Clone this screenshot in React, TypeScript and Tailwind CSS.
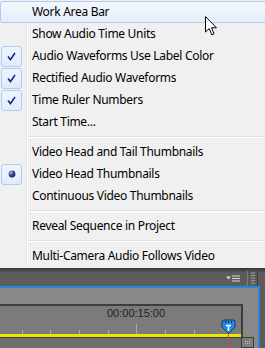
import React from 'react'

type Item =
  | { kind: 'sep' }
  | { kind: 'row'; label: string; mark?: 'check' | 'radio'; hot?: boolean }

const items: Item[] = [
  { kind: 'row', label: 'Work Area Bar', hot: true },
  { kind: 'row', label: 'Show Audio Time Units' },
  { kind: 'row', label: 'Audio Waveforms Use Label Color', mark: 'check' },
  { kind: 'row', label: 'Rectified Audio Waveforms', mark: 'check' },
  { kind: 'row', label: 'Time Ruler Numbers', mark: 'check' },
  { kind: 'row', label: 'Start Time...' },
  { kind: 'sep' },
  { kind: 'row', label: 'Video Head and Tail Thumbnails' },
  { kind: 'row', label: 'Video Head Thumbnails', mark: 'radio' },
  { kind: 'row', label: 'Continuous Video Thumbnails' },
  { kind: 'sep' },
  { kind: 'row', label: 'Reveal Sequence in Project' },
  { kind: 'sep' },
  { kind: 'row', label: 'Multi-Camera Audio Follows Video' },
]

const ticks = [21.5, 50.2, 78.9, 107.6, 136.3, 165, 193.7]

function Gutter() {
  return (
    <div className="flex h-full shrink-0">
      <div className="w-[26px]" />
      <div className="w-px bg-[#e2e3e3]" />
      <div className="w-px bg-white" />
    </div>
  )
}

function Mark({ type }: { type: 'check' | 'radio' }) {
  return (
    <div className="flex h-[21px] w-[21px] items-center justify-center rounded-[3px] border border-[#aecbf0] bg-gradient-to-b from-[#edf4fd] to-[#e2ecf9]">
      {type === 'check' ? (
        <svg width="9" height="9" viewBox="0 0 9 9">
          <path d="M1 4.6 L3.4 7.6 L8 1" fill="none" stroke="#1a2590" strokeWidth="1.6" />
        </svg>
      ) : (
        <svg width="8" height="8" viewBox="0 0 8 8">
          <defs>
            <radialGradient id="dot" cx="0.35" cy="0.3" r="0.7">
              <stop offset="0" stopColor="#b8b8f0" />
              <stop offset="0.5" stopColor="#4a4aa0" />
              <stop offset="1" stopColor="#1a1a5a" />
            </radialGradient>
          </defs>
          <circle cx="4" cy="4" r="3.4" fill="url(#dot)" />
        </svg>
      )}
    </div>
  )
}

function Menu() {
  return (
    <div className="w-[272px] bg-[#f0f0f0] pt-px pb-px text-[12px] tracking-[-0.3px] text-black font-['Noto_Sans',sans-serif]">
      {items.map((it, i) => {
        if (it.kind === 'sep') {
          return (
            <div key={i} className="flex h-[8px]">
              <Gutter />
              <div className="flex flex-1 flex-col justify-center">
                <div className="h-px bg-[#e0e0e0]" />
                <div className="h-px bg-white" />
              </div>
            </div>
          )
        }
        if (it.hot) {
          return (
            <div
              key={i}
              className="flex h-[22px] items-center rounded-[3px] border border-[#a9cdf2] bg-gradient-to-b from-[#f4f8fd] to-[#e4edf9] pl-[31px]"
            >
              {it.label}
            </div>
          )
        }
        return (
          <div key={i} className="flex h-[22px] items-center">
            <div className="relative flex h-full shrink-0">
              <Gutter />
              {it.mark && (
                <div className="absolute left-px top-[0.5px]">
                  <Mark type={it.mark} />
                </div>
              )}
            </div>
            <span className="pl-[4px]">{it.label}</span>
          </div>
        )
      })}
    </div>
  )
}

function Cursor() {
  return (
    <svg className="absolute left-[205px] top-[16px]" width="13" height="20" viewBox="0 0 13 20">
      <path
        d="M0.5 0.5 L0.5 16 L4.2 12.6 L6.8 18.8 L9 17.8 L6.5 11.8 L11.5 11.8 Z"
        fill="white"
        stroke="black"
        strokeWidth="1"
        strokeLinejoin="miter"
      />
    </svg>
  )
}

function Playhead() {
  return (
    <>
      <svg className="absolute left-[221px] top-[319px]" width="15" height="16" viewBox="0 0 15 16">
        <path d="M1 3 Q1 1 3 1 L12 1 Q14 1 14 3 L14 8 L7.5 14.5 L1 8 Z" fill="#1e8de6" stroke="#143a5c" strokeWidth="1" />
        <path d="M4.5 2 V4 M7.5 2 V4 M10.5 2 V4" stroke="#103050" strokeWidth="1" />
        <path d="M5 6.5 H10 M7.5 6.5 V12" stroke="white" strokeWidth="1.6" />
      </svg>
      <div className="absolute left-[228px] top-[334px] h-[14px] w-px bg-[#e8402a]" />
    </>
  )
}

export default function App() {
  return (
    <div className="relative h-[348px] w-[265px] overflow-hidden bg-[#5e5e5e]">
      <Menu />

      {/* panel header */}
      <div className="flex h-[18px] items-center bg-[linear-gradient(#363636,#5c5c5c_5px)] pt-[3px]">
        <div className="w-[226px]" />
        <svg width="15" height="8" viewBox="0 0 15 8">
          <path d="M0 1.5 H5 L2.5 4.5 Z" fill="#d8d8d8" />
          <path d="M6 1 H14 M6 3.5 H14 M6 6 H14" stroke="#d8d8d8" strokeWidth="1" />
        </svg>
        <div className="ml-[6px] h-[15px] w-px bg-[#7a7a7a]" />
        <svg className="ml-[3px]" width="4" height="13" viewBox="0 0 4 13">
          <path d="M0 1 H4 M0 3.5 H4 M0 6 H4 M0 8.5 H4 M0 11 H4" stroke="#9a9a9a" strokeWidth="1" />
        </svg>
        <div className="ml-[2px] h-[15px] w-px bg-[#3c3c3c]" />
      </div>

      {/* timeline panel */}
      <div className="flex">
        <div className="w-[260px] border-t-2 border-r-2 border-[#2a84dc] bg-[#888888]">
          <div className="h-[16px]" />
          <div className="flex">
            <div className="w-[243px] border-t-2 border-r-2 border-[#3d3d3d] bg-[#7b7b7b]">
              <div className="h-[28px] font-['Liberation_Sans',sans-serif]">
                <div className="h-[14px] pl-[107px] text-[11px] leading-[14px] text-[#1e1e1e]">00:00:15:00</div>
                <svg width="241" height="14" viewBox="0 0 241 14" className="block">
                  {ticks.map(x => (
                    <line
                      key={x}
                      x1={Math.round(x) + 0.5}
                      x2={Math.round(x) + 0.5}
                      y1={x === 136.3 ? 4 : 10}
                      y2={14}
                      stroke="#a9a9a9"
                      strokeWidth="1"
                    />
                  ))}
                </svg>
              </div>
              <div className="h-[3px] bg-[#e9e900]" />
            </div>
            <div className="flex-1" />
          </div>
          <div className="flex h-[11px]">
            <div className="w-[241px] border-t border-[#3d3d3d] bg-[#6e6e6e]" />
            <div className="w-[13px] border border-[#3d3d3d] bg-[#7c7c7c] pl-[3px] pt-[3px]">
              <svg width="6" height="4" viewBox="0 0 6 4">
                <path d="M0.5 0 V4 M2.5 0 V4 M4.5 0 V4" stroke="#bcbcbc" strokeWidth="1" strokeDasharray="1 1" />
              </svg>
            </div>
          </div>
        </div>
        <div className="flex-1 bg-[#5a5a5a]" />
      </div>

      <Playhead />
      <Cursor />
    </div>
  )
}
